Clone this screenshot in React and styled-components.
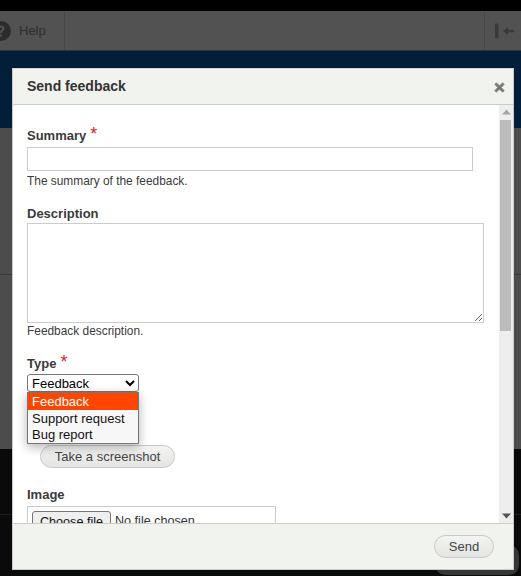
import React from "react";
import styled, { createGlobalStyle } from "styled-components";

const Global = createGlobalStyle`
  html, body { margin: 0; padding: 0; background: #0a0a0a; }
  body { font-family: "Liberation Sans", Arial, sans-serif; overflow: hidden; }
`;

const Page = styled.div`
  position: relative;
  width: 521px;
  height: 576px;
  overflow: hidden;
  display: flex;
  flex-direction: column;
`;
const TopStrip = styled.div`height: 11px; background: #000;`;
const Toolbar = styled.div`
  height: 39px;
  flex: none;
  background: #525252;
  border-bottom: 1px solid #333;
  display: flex;
  align-items: center;
  color: #2e2e2e;
  font-size: 13px;
`;
const HelpTab = styled.div`
  width: 65px;
  height: 100%;
  box-sizing: border-box;
  border-right: 1px solid #474747;
  display: flex;
  align-items: center;
  gap: 8px;
  margin-right: auto;
  & > svg { margin-left: -9px; flex: none; }
`;
const CollapseTab = styled.div`
  width: 37px;
  height: 100%;
  box-sizing: border-box;
  border-left: 1px solid #474747;
  padding-left: 2px;
  display: flex;
  align-items: center;
  justify-content: center;
`;
const NavyBand = styled.div`height: 77px; flex: none; background: #021e38;`;
const GreyBand = styled.div`
  height: 321px;
  flex: none;
  background: #4c4c4c;
  display: flex;
  flex-direction: column;
  justify-content: flex-start;
  padding-top: 146px;
  box-sizing: border-box;
`;
const BandRule = styled.div`height: 1px; background: ${(p) => p.$c};`;
const DarkBand = styled.div`
  flex: 1;
  background: #0a0a0a;
  padding-top: 65px;
`;
const GhostButton = styled.div`
  position: absolute;
  left: 435px;
  top: 545px;
  width: 84px;
  height: 30px;
  border-radius: 10px;
  background: #363636;
`;

const Dialog = styled.div`
  position: absolute;
  left: 12px;
  top: 68px;
  width: 502px;
  height: 502px;
  box-sizing: border-box;
  border: 1px solid #c9c9c9;
  border-top-color: #d5d5d5;
  background: #fff;
  display: flex;
  flex-direction: column;
`;
const TitleBar = styled.div`
  height: 36px;
  flex: none;
  box-sizing: border-box;
  background: #f1f3ee;
  border-bottom: 1px solid #ccc;
  display: flex;
  align-items: center;
  justify-content: space-between;
  padding: 1px 8px 0 14px;
`;
const Title = styled.h2`
  margin: -2px 0 0;
  font-size: 14px;
  font-weight: 700;
  color: #333;
`;
const Body = styled.div`
  flex: 1;
  min-height: 0;
  display: flex;
  overflow: hidden;
`;
const Form = styled.form`
  flex: 1;
  min-width: 0;
  padding: 22px 14px 0;
  color: #333;
  overflow: hidden;
`;
const Field = styled.div`
  margin-bottom: ${(p) => p.$mb || 0}px;
  position: relative;
`;
const Label = styled.label`
  display: block;
  font-size: 13px;
  font-weight: 700;
  line-height: 15px;
  height: 15px;
  color: #3b3b3b;
  margin-bottom: ${(p) => p.$mb}px;
`;
const Star = styled.span`
  color: #e6191f;
  font-size: 18px;
  font-weight: 400;
  line-height: 15px;
  margin-left: 4px;
`;
const TextInput = styled.input`
  display: block;
  box-sizing: border-box;
  width: 446px;
  height: 24px;
  border: 1px solid #ccc;
  padding: 0 4px;
  outline: none;
  background: #fff;
`;
const TextArea = styled.textarea`
  display: block;
  box-sizing: border-box;
  width: 457px;
  height: 100px;
  border: 1px solid #ccc;
  padding: 4px;
  outline: none;
  background: #fff;
  resize: vertical;
`;
const Help = styled.div`
  font-size: 11.9px;
  line-height: 14px;
  margin-top: ${(p) => p.$mt}px;
  color: #3b3b3b;
`;
const TypeSelect = styled.select`
  display: block;
  width: 112px;
  height: 18px;
  box-sizing: border-box;
  font-family: "Liberation Sans", Arial, sans-serif;
  font-size: 13px;
  color: #000;
  background: #fff;
  border: 1px solid #767676;
  border-radius: 3px;
  padding: 0;
  outline: none;
`;
const Options = styled.ul`
  position: absolute;
  z-index: 2;
  left: 0;
  top: 37px;
  width: 112px;
  height: 52px;
  box-sizing: border-box;
  margin: 0;
  padding: 0;
  list-style: none;
  background: #f7f7f7;
  border: 1px solid #767676;
  box-shadow: 0 3px 10px rgba(0, 0, 0, 0.3);
  font-size: 13px;
  color: #111;
`;
const Option = styled.li`
  height: ${(p) => (p.$active ? 17 : 16)}px;
  line-height: 18px;
  padding-left: 4px;
  background: ${(p) => (p.$active ? "#ff4500" : "transparent")};
  color: ${(p) => (p.$active ? "#fff" : "#111")};
`;
const Pill = styled.button`
  box-sizing: border-box;
  height: 23px;
  border: 1px solid #c9c9c9;
  border-radius: 12px;
  background: linear-gradient(#f4f4f4, #e4e4e2);
  font-family: "Liberation Sans", Arial, sans-serif;
  font-size: 13px;
  color: #444;
  padding: 0;
  width: ${(p) => p.$w}px;
`;
const ScreenshotRow = styled.div`
  padding: 53px 0 0 13px;
  margin-bottom: 19px;
  display: flex;
`;
const FileBox = styled.div`
  width: 249px;
  box-sizing: border-box;
  border: 1px solid #ccc;
  padding: 4px;
  height: 40px;
  display: flex;
  align-items: flex-start;
  gap: 4px;
  font-size: 12.6px;
  color: #333;
`;
const ChooseButton = styled.button`
  box-sizing: border-box;
  width: 79px;
  height: 21px;
  padding: 0;
  flex: none;
  font-family: "Liberation Sans", Arial, sans-serif;
  font-size: 12.6px;
  color: #111;
  background: #efefef;
  border: 1px solid #767676;
  border-radius: 3px;
`;
const FileName = styled.span`
  line-height: 21px;
`;
const ScrollTrack = styled.div`
  width: 14px;
  flex: none;
  background: #eee;
  display: flex;
  flex-direction: column;
  align-items: center;
`;
const Arrow = styled.svg`
  flex: none;
  display: block;
  margin: ${(p) => p.$m};
`;
const Thumb = styled.div`
  width: 11px;
  height: 211px;
  background: #bcbcbc;
  margin-left: -1px;
`;
const Spacer = styled.div`flex: 1;`;
const Footer = styled.div`
  height: 46px;
  flex: none;
  box-sizing: border-box;
  background: #f1f3ee;
  border-top: 1px solid #ccc;
  display: flex;
  align-items: center;
  justify-content: flex-end;
  padding: 0 19px 1px 0;
`;

export default function App() {
  return (
    <Page>
      <Global />
      <TopStrip />
      <Toolbar>
        <HelpTab>
          <svg width="20" height="20" viewBox="0 0 20 20">
            <circle cx="10" cy="10" r="10" fill="#2c2c2c" />
            <path d="M6.6 8c0-2.2 1.5-3.5 3.5-3.5s3.4 1.2 3.4 3c0 2.6-2.6 2.4-2.6 4.4H8.700c0-2.900 2.500-2.900 2.500-4.300 0-.7-.5-1.200-1.200-1.200-.8 0-1.200.6-1.200 1.600z M8.700 13.500h2.200v2.200H8.700z" fill="#525252" />
          </svg>
          <span>Help</span>
        </HelpTab>
        <CollapseTab>
          <svg width="20" height="16" viewBox="0 0 20 16">
            <rect x="1" y="0.500" width="3.500" height="15" fill="#3a3a3a" />
            <path d="M9 8l5-4v2.700h6v2.600h-6V12z" fill="#3a3a3a" />
          </svg>
        </CollapseTab>
      </Toolbar>
      <NavyBand />
      <GreyBand>
        <BandRule $c="#3a3a3a" />
      </GreyBand>
      <DarkBand>
        <BandRule $c="#1c1c1c" />
      </DarkBand>
      <GhostButton />
      <Dialog>
        <TitleBar>
          <Title>Send feedback</Title>
          <svg width="11" height="11" viewBox="0 0 12 12">
            <path d="M2.500 1L6 4.200 9.500 1 11 2.500 7.800 6 11 9.500 9.500 11 6 7.800 2.500 11 1 9.500 4.200 6 1 2.500z" fill="#777" stroke="#777" strokeWidth="1" />
          </svg>
        </TitleBar>
        <Body>
          <Form>
            <Field $mb={18}>
              <Label $mb={5}>
                Summary<Star>*</Star>
              </Label>
              <TextInput type="text" />
              <Help $mt={3}>The summary of the feedback.</Help>
            </Field>
            <Field $mb={17}>
              <Label $mb={2}>Description</Label>
              <TextArea />
              <Help $mt={1}>Feedback description.</Help>
            </Field>
            <Field>
              <Label $mb={4}>
                Type<Star>*</Star>
              </Label>
              <TypeSelect defaultValue="Feedback">
                <option>Feedback</option>
                <option>Support request</option>
                <option>Bug report</option>
              </TypeSelect>
              <Options>
                <Option $active>Feedback</Option>
                <Option>Support request</Option>
                <Option>Bug report</Option>
              </Options>
            </Field>
            <ScreenshotRow>
              <Pill type="button" $w={135}>Take a screenshot</Pill>
            </ScreenshotRow>
            <Field>
              <Label $mb={4}>Image</Label>
              <FileBox>
                <ChooseButton type="button">Choose file</ChooseButton>
                <FileName>No file chosen</FileName>
              </FileBox>
            </Field>
          </Form>
          <ScrollTrack>
            <Arrow $m="4px 0 5px" width="9" height="6" viewBox="0 0 9 6">
              <path d="M4.500 0.500L9 5.500H0z" fill="#a6a6a6" />
            </Arrow>
            <Thumb />
            <Spacer />
            <Arrow $m="0 0 4px" width="9" height="6" viewBox="0 0 9 6">
              <path d="M0 0.500h9L4.500 5.500z" fill="#555" />
            </Arrow>
          </ScrollTrack>
        </Body>
        <Footer>
          <Pill type="button" $w={60}>Send</Pill>
        </Footer>
      </Dialog>
    </Page>
  );
}
